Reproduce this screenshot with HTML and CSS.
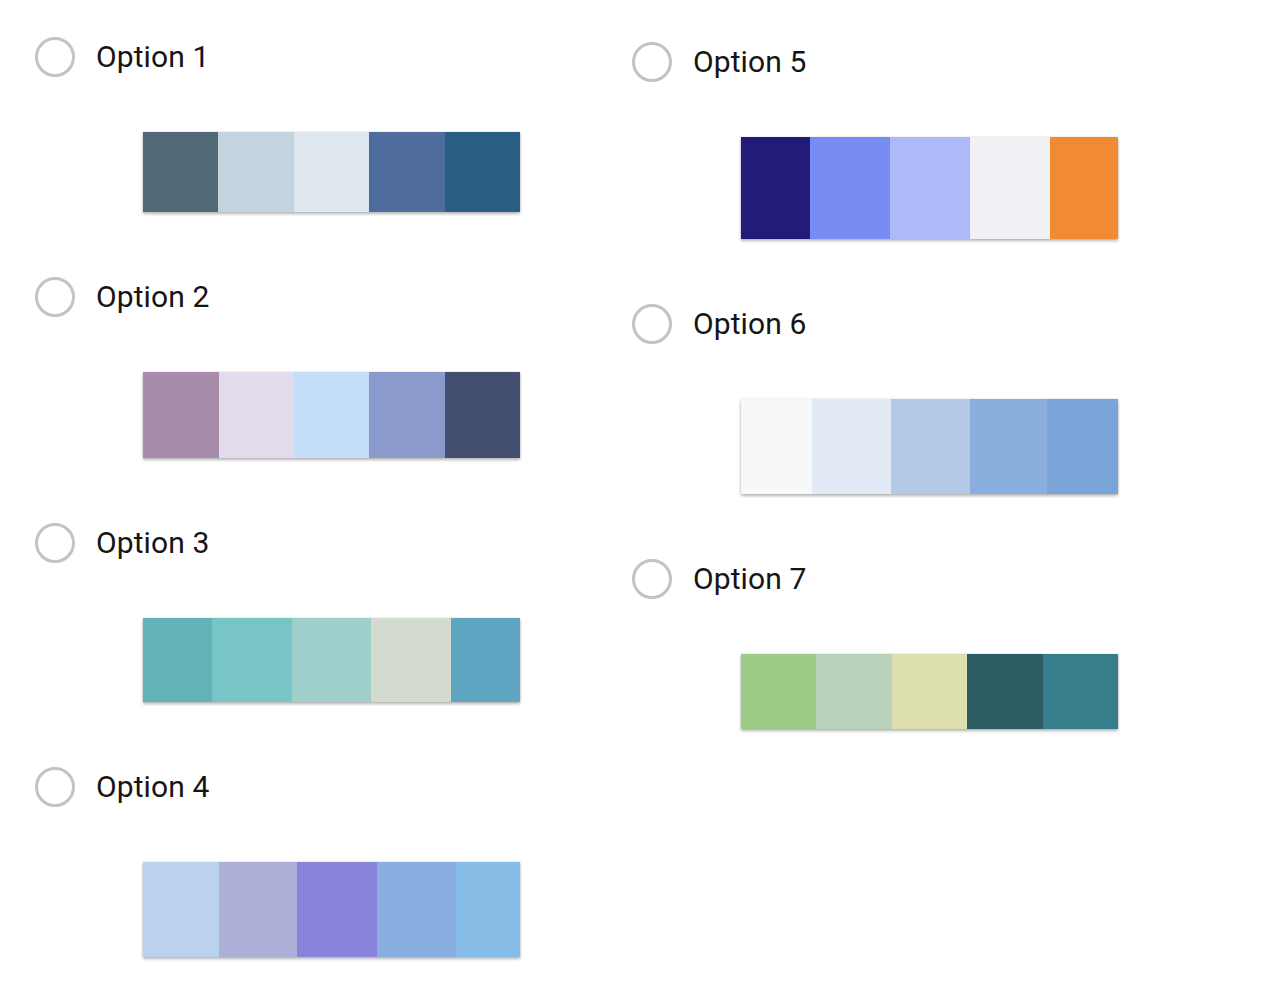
FILE: index.html
```html
<!DOCTYPE html>
<html lang="en">
<head>
<meta charset="utf-8">
<title>Palette options</title>
<link rel="stylesheet" href="styles.css">
</head>
<body>
<div class="page">
  <div class="col col-left">
    <div class="item">
      <label class="option"><span class="radio"></span><span class="label">Option 1</span></label>
      <div class="palette p1">
        <span class="sw" style="background:#526977;flex:75"></span>
        <span class="sw" style="background:#c4d4df;flex:76"></span>
        <span class="sw" style="background:#dee6ee;flex:76"></span>
        <span class="sw" style="background:#4f6c9f;flex:76"></span>
        <span class="sw" style="background:#2b5e83;flex:75"></span>
      </div>
    </div>
    <div class="item">
      <label class="option"><span class="radio"></span><span class="label">Option 2</span></label>
      <div class="palette p2">
        <span class="sw" style="background:#a78dab;flex:76"></span>
        <span class="sw" style="background:#e3dcec;flex:75"></span>
        <span class="sw" style="background:#c5dffa;flex:76"></span>
        <span class="sw" style="background:#8a9acd;flex:76"></span>
        <span class="sw" style="background:#434e70;flex:75"></span>
      </div>
    </div>
    <div class="item">
      <label class="option"><span class="radio"></span><span class="label">Option 3</span></label>
      <div class="palette p3">
        <span class="sw" style="background:#62b3b8;flex:69"></span>
        <span class="sw" style="background:#77c5c6;flex:80"></span>
        <span class="sw" style="background:#9fcfca;flex:80"></span>
        <span class="sw" style="background:#d3dad0;flex:80"></span>
        <span class="sw" style="background:#5ea6c1;flex:69"></span>
      </div>
    </div>
    <div class="item">
      <label class="option"><span class="radio"></span><span class="label">Option 4</span></label>
      <div class="palette p4">
        <span class="sw" style="background:#bbd2ef;flex:76"></span>
        <span class="sw" style="background:#adb0d8;flex:78"></span>
        <span class="sw" style="background:#8884db;flex:80"></span>
        <span class="sw" style="background:#8aaee2;flex:79"></span>
        <span class="sw" style="background:#86bce6;flex:64"></span>
      </div>
    </div>
  </div>
  <div class="col col-right">
    <div class="item">
      <label class="option"><span class="radio"></span><span class="label">Option 5</span></label>
      <div class="palette p5">
        <span class="sw" style="background:#221c78;flex:69"></span>
        <span class="sw" style="background:#778cf3;flex:80"></span>
        <span class="sw" style="background:#aebaf7;flex:79"></span>
        <span class="sw" style="background:#f0f1f5;flex:80"></span>
        <span class="sw" style="background:#f08b33;flex:68"></span>
      </div>
    </div>
    <div class="item">
      <label class="option"><span class="radio"></span><span class="label">Option 6</span></label>
      <div class="palette p6">
        <span class="sw" style="background:#f7f8fa;flex:71"></span>
        <span class="sw" style="background:#e1eaf5;flex:79"></span>
        <span class="sw" style="background:#b3c9e7;flex:78"></span>
        <span class="sw" style="background:#8aaedd;flex:77"></span>
        <span class="sw" style="background:#7aa3d7;flex:71"></span>
      </div>
    </div>
    <div class="item">
      <label class="option"><span class="radio"></span><span class="label">Option 7</span></label>
      <div class="palette p7">
        <span class="sw" style="background:#9ccd88;flex:1"></span>
        <span class="sw" style="background:#b9d2bc;flex:1"></span>
        <span class="sw" style="background:#dde0ae;flex:1"></span>
        <span class="sw" style="background:#2d5c62;flex:1"></span>
        <span class="sw" style="background:#367e8c;flex:1"></span>
      </div>
    </div>
  </div>
</div>
</body>
</html>
```

FILE: styles.css
```css
html, body {
  margin: 0;
  padding: 0;
  background: #ffffff;
}

body {
  font-family: Roboto, "Liberation Sans", Arial, sans-serif;
  color: #151515;
}

.page {
  display: grid;
  grid-template-columns: 597px 1fr;
  padding-left: 35px;
}

.col-left {
  padding-top: 37px;
}

.col-right {
  padding-top: 42px;
}

.item {
  display: flex;
  flex-direction: column;
  align-items: flex-start;
  margin-bottom: 65px;
}

.option {
  display: flex;
  align-items: center;
  gap: 21px;
  height: 40px;
  cursor: pointer;
}

.radio {
  box-sizing: border-box;
  width: 40px;
  height: 40px;
  border: 3px solid #c3c3c3;
  border-radius: 50%;
  flex: none;
}

.label {
  font-size: 30px;
  line-height: 40px;
  letter-spacing: 0.1px;
}

.palette {
  display: flex;
  width: 377px;
  margin-top: 55px;
  margin-left: 108px;
  box-shadow: 0 2px 3px rgba(0, 0, 0, 0.28), 0 0 2px rgba(0, 0, 0, 0.12);
}

.col-right .palette {
  margin-left: 109px;
}

.sw {
  display: block;
  min-width: 0;
}

.p1 { height: 80px; }
.p2 { height: 86px; }
.p3 { height: 84px; }
.p4 { height: 95px; }
.p5 { height: 102px; }
.p6 { height: 95px; }
.p7 { height: 75px; }
```
